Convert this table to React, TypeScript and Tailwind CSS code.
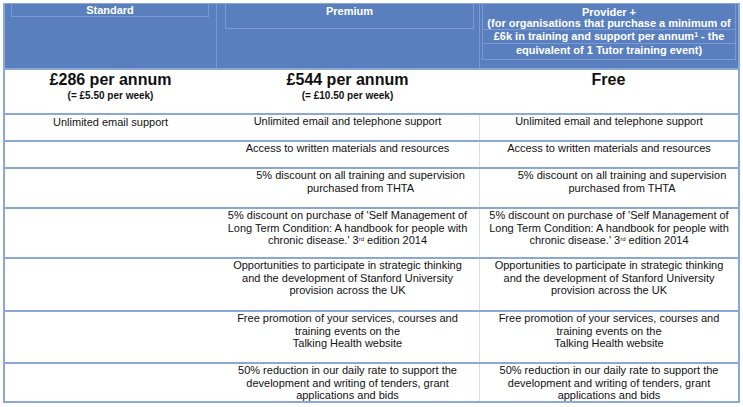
import type { ReactNode } from "react";

const rows: { h: string; shift?: boolean; std?: ReactNode; feat: ReactNode }[] = [
    { h: "h-[27px]", std: "Unlimited email support", feat: "Unlimited email and telephone support" },
    { h: "h-[27px]", feat: "Access to written materials and resources" },
    {
        h: "h-[40px]",
        shift: true,
        feat: (
            <>
                5% discount on all training and supervision
                <br />
                purchased from THTA
            </>
        ),
    },
    {
        h: "h-[50px]",
        feat: (
            <>
                5% discount on purchase of 'Self Management of
                <br />
                Long Term Condition: A handbook for people with
                <br />
                chronic disease.' 3<sup className="text-[6px]">rd</sup> edition 2014
            </>
        ),
    },
    {
        h: "h-[53px]",
        feat: (
            <>
                Opportunities to participate in strategic thinking
                <br />
                and the development of Stanford University
                <br />
                provision across the UK
            </>
        ),
    },
    {
        h: "h-[52px]",
        feat: (
            <>
                Free promotion of your services, courses and
                <br />
                training events on the
                <br />
                Talking Health website
            </>
        ),
    },
    {
        h: "h-[39px]",
        feat: (
            <>
                50% reduction in our daily rate to support the
                <br />
                development and writing of tenders, grant
                <br />
                applications and bids
            </>
        ),
    },
];

export default function App() {
    return (
        <div className="w-[743px] h-[407px] bg-white pt-[3px] pl-[3px] font-['Liberation_Sans',Arial,sans-serif] text-[#111]">
            <div className="w-[737px] border-t border-x-2 border-b-2 border-[#8ba7d8]">
                {/* header */}
                <div className="flex h-[64px] bg-[#5a7fbf] text-white font-bold text-[11px]">
                    <div className="w-[211px] pl-[6px]">
                        <div className="w-[198px] h-[13px] border-x border-b border-[#7d9ad0] leading-[13px] text-center">
                            Standard
                        </div>
                    </div>
                    <div className="w-[263px] border-l border-[#7d9ad0] pl-[8px]">
                        <div className="w-[249px] h-[25px] border-x border-b border-[#7d9ad0] leading-[14px] text-center">
                            Premium
                        </div>
                    </div>
                    <div className="w-[259px] border-l border-[#7d9ad0] pl-[2px]">
                        <div className="w-[254px] h-[56px] border-x border-b border-[#7d9ad0] text-center">
                            <div className="h-[16px] leading-[16px]">Provider +</div>
                            <div className="h-[13.5px] mt-[-3.5px] leading-[13.5px] border-b border-[#7d9ad0]">
                                (for organisations that purchase a minimum of
                            </div>
                            <div className="h-[13.5px] leading-[13.5px] border-b border-[#7d9ad0]">
                                £6k in training and support per annum<sup className="text-[7px]">1</sup> - the
                            </div>
                            <div className="h-[13.5px] leading-[13.5px]">equivalent of 1 Tutor training event)</div>
                        </div>
                    </div>
                </div>

                {/* prices */}
                <div className="flex h-[45px] border-t-2 border-[#8ba7d8] text-center font-bold">
                    <div className="w-[211px]">
                        <div className="text-[16px] leading-[18px] mt-px">£286 per annum</div>
                        <div className="text-[10px] leading-[12px] mt-px">(= £5.50 per week)</div>
                    </div>
                    <div className="w-[263px]">
                        <div className="text-[16px] leading-[18px] mt-px">£544 per annum</div>
                        <div className="text-[10px] leading-[12px] mt-px">(= £10.50 per week)</div>
                    </div>
                    <div className="w-[259px]">
                        <div className="text-[16px] leading-[18px] mt-px">Free</div>
                    </div>
                </div>

                {/* features */}
                {rows.map((r, i) => (
                    <div
                        key={i}
                        className={`flex border-t-2 border-[#8ba7d8] text-[11px] leading-[12.5px] text-center ${r.h}`}
                    >
                        <div className="w-[211px] pt-px">{r.std}</div>
                        <div className={`w-[263px] ${r.shift ? "pl-[26px]" : ""}`}>{r.feat}</div>
                        <div className={`w-[259px] border-l border-[#d3ddef] ${r.shift ? "pl-[26px]" : ""}`}>
                            {r.feat}
                        </div>
                    </div>
                ))}
            </div>
        </div>
    );
}
